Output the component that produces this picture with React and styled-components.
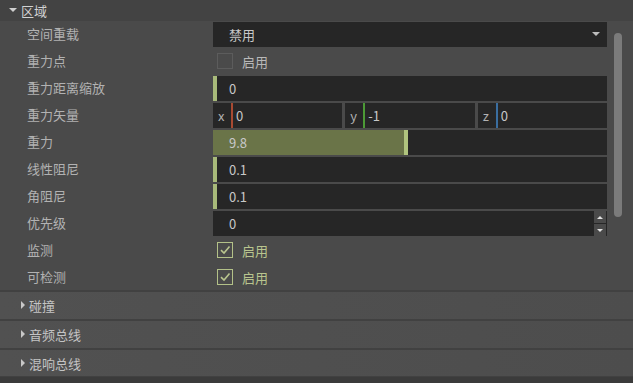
import React from 'react';
import styled, { createGlobalStyle } from 'styled-components';

const GlobalStyle = createGlobalStyle`
  html, body {
    margin: 0;
    padding: 0;
    background: #4a4a4a;
  }
  body {
    font-family: "Noto Sans CJK SC", "Noto Sans", sans-serif;
    font-size: 13px;
  }
`;

const Panel = styled.div`
  position: relative;
  width: 633px;
  height: 383px;
  background: #4a4a4a;
  overflow: hidden;
`;

const GroupHeader = styled.div`
  display: flex;
  align-items: center;
  height: 21px;
  padding-left: 9px;
  padding-bottom: 1px;
  box-sizing: border-box;
  background: #434343;
  color: #d2d2d2;
  font-size: 13px;
`;

const Arrow = styled.span`
  display: inline-block;
  width: 0;
  height: 0;
  margin-right: 4px;
  border-style: solid;
  ${({ dir }) =>
    dir === 'down'
      ? 'border-width: 4px 4px 0 4px; border-color: #d0d0d0 transparent transparent transparent;'
      : 'border-width: 4px 0 4px 4px; border-color: transparent transparent transparent #c8c8c8;'}
`;

const Rows = styled.div`
  display: flex;
  flex-direction: column;
  padding-right: 26px;
`;

const Row = styled.div`
  display: grid;
  grid-template-columns: 213px 1fr;
  height: 27px;
  align-items: center;
`;

const Label = styled.div`
  padding-left: 27px;
  padding-bottom: 2px;
  color: #b2b2b2;
  line-height: 25px;
`;

const Field = styled.div`
  position: relative;
  display: flex;
  align-items: center;
  height: 25px;
  padding-bottom: 1px;
  box-sizing: border-box;
  background: ${({ fill }) => (fill ? '#262626' : 'transparent')};
  color: #c8c8c8;
  padding-left: 16px;
`;

const Accent = styled.div`
  position: absolute;
  left: 0;
  top: 0;
  bottom: 0;
  width: 4px;
  background: #a8ba7a;
`;

const SliderFill = styled.div`
  position: absolute;
  left: 0;
  top: 0;
  bottom: 0;
  background: #6a7448;
  border-right: 4px solid #b0c47e;
`;

const FieldText = styled.span`
  position: relative;
`;

const DropArrow = styled.span`
  position: absolute;
  right: 7px;
  top: 10px;
  border-style: solid;
  border-width: 4px 4px 0 4px;
  border-color: #bdbdbd transparent transparent transparent;
`;

const Spinner = styled.div`
  position: absolute;
  right: 1px;
  top: 0;
  bottom: 0;
  width: 12px;
  display: flex;
  flex-direction: column;
  gap: 1px;
`;

const SpinButton = styled.div`
  flex: 1;
  display: flex;
  align-items: center;
  justify-content: center;
  background: #4a4a4a;
  &::after {
    content: '';
    border-style: solid;
    ${({ up }) =>
      up
        ? 'border-width: 0 3px 3px 3px; border-color: transparent transparent #e0e0e0 transparent;'
        : 'border-width: 3px 3px 0 3px; border-color: #e0e0e0 transparent transparent transparent;'}
  }
`;

const Vector = styled.div`
  display: grid;
  grid-template-columns: 1fr 1fr 1fr;
  gap: 3px;
  height: 25px;
`;

const Axis = styled.div`
  display: flex;
  align-items: center;
  padding-bottom: 1px;
  box-sizing: border-box;
  background: #262626;
  color: #c8c8c8;
  padding-left: 5px;
`;

const AxisName = styled.span`
  color: #b2b2b2;
  width: 13px;
`;

const AxisBar = styled.span`
  align-self: stretch;
  width: 2px;
  margin: 0 3px -1px 0;
  background: ${({ color }) => color};
`;

const CheckWrap = styled.div`
  display: flex;
  align-items: center;
  padding-left: 4px;
  padding-bottom: 1px;
  color: ${({ checked }) => (checked ? '#b9c58e' : '#b9b9b9')};
`;

const Box = styled.div`
  width: 14px;
  height: 14px;
  margin-right: 9px;
  border: 1px solid ${({ checked }) => (checked ? '#b3c188' : '#5c5c5c')};
  display: flex;
  align-items: center;
  justify-content: center;
`;

const Section = styled.div`
  display: flex;
  align-items: center;
  height: 27px;
  padding-bottom: 1px;
  box-sizing: border-box;
  margin-top: ${({ first }) => (first ? '1px' : '2px')};
  padding-left: 21px;
  background: linear-gradient(to right, #515151, #4d4d4d);
  color: #c4c4c4;
  box-shadow: 0 -2px 0 #414141;
`;

const Footer = styled.div`
  height: 6px;
  background: #3b3b3b;
  box-shadow: 0 -1px 0 #414141;
`;

const ScrollThumb = styled.div`
  position: absolute;
  left: 614px;
  top: 33px;
  width: 8px;
  height: 184px;
  border-radius: 4px;
  background: #7b7b7b;
`;

const Check = ({ checked }) => (
  <CheckWrap checked={checked}>
    <Box checked={checked}>
      {checked && (
        <svg width="12" height="12" viewBox="0 0 12 12">
          <path d="M2 6.2 L5 9 L10.5 2.5" stroke="#b9c58e" strokeWidth="1.6" fill="none" />
        </svg>
      )}
    </Box>
    启用
  </CheckWrap>
);

const NumField = ({ value, accent, spin }) => (
  <Field fill>
    {accent && <Accent />}
    <FieldText>{value}</FieldText>
    {spin && (
      <Spinner>
        <SpinButton up />
        <SpinButton />
      </Spinner>
    )}
  </Field>
);

const App = () => (
  <>
    <GlobalStyle />
    <Panel>
      <GroupHeader>
        <Arrow dir="down" />
        区域
      </GroupHeader>
      <Rows>
        <Row>
          <Label>空间重载</Label>
          <Field fill>
            <FieldText>禁用</FieldText>
            <DropArrow />
          </Field>
        </Row>
        <Row>
          <Label>重力点</Label>
          <Check />
        </Row>
        <Row>
          <Label>重力距离缩放</Label>
          <NumField value="0" accent />
        </Row>
        <Row>
          <Label>重力矢量</Label>
          <Vector>
            <Axis>
              <AxisName>x</AxisName>
              <AxisBar color="#a84a32" />
              0
            </Axis>
            <Axis>
              <AxisName>y</AxisName>
              <AxisBar color="#4c9a36" />
              -1
            </Axis>
            <Axis>
              <AxisName>z</AxisName>
              <AxisBar color="#3a6ea0" />
              0
            </Axis>
          </Vector>
        </Row>
        <Row>
          <Label>重力</Label>
          <Field fill>
            <SliderFill style={{ width: '191px' }} />
            <FieldText>9.8</FieldText>
          </Field>
        </Row>
        <Row>
          <Label>线性阻尼</Label>
          <NumField value="0.1" accent />
        </Row>
        <Row>
          <Label>角阻尼</Label>
          <NumField value="0.1" accent />
        </Row>
        <Row>
          <Label>优先级</Label>
          <NumField value="0" spin />
        </Row>
        <Row>
          <Label>监测</Label>
          <Check checked />
        </Row>
        <Row>
          <Label>可检测</Label>
          <Check checked />
        </Row>
      </Rows>
      <Section first>
        <Arrow />
        碰撞
      </Section>
      <Section>
        <Arrow />
        音频总线
      </Section>
      <Section>
        <Arrow />
        混响总线
      </Section>
      <Footer />
      <ScrollThumb />
    </Panel>
  </>
);

export default App;
